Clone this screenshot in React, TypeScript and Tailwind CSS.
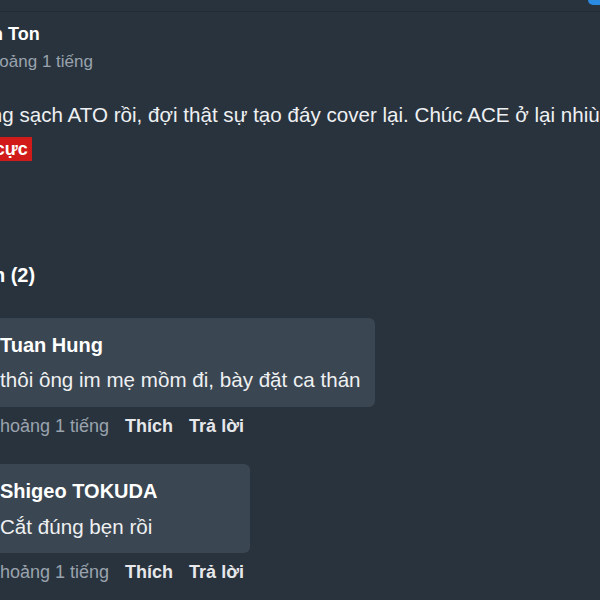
import React from "react";

export default function App() {
  return (
    <div className="relative w-[600px] h-[600px] overflow-hidden bg-[#29333e] font-['Liberation_Sans',Arial,sans-serif]">
      <div className="absolute right-[-12px] top-[-20px] w-[24px] h-[25px] rounded-[5px] bg-[#2b8ae2]" />
      <div className="h-[11px]" />
      <div className="border-t border-[#232b35]">
        <div className="ml-[-63px] flex flex-col items-start pt-[11px]">
          <div className="text-[18px] leading-[22px] font-bold text-white whitespace-nowrap">Nguyen Ton</div>
          <div className="mt-[5px] text-[17px] leading-[24px] text-[#9aa3ad] whitespace-nowrap">Cách khoảng 1 tiếng</div>
          <div className="mt-[27px] text-[20.6px] leading-[28px] text-[#eef0f2] whitespace-nowrap">
            Xả hàng sạch ATO rồi, đợi thật sự tạo đáy cover lại. Chúc ACE ở lại nhiù may mắn
          </div>
          <div className="mt-[8px] ml-[12px] h-[24px] px-[4px] flex items-center bg-[#d11a1a] text-[18px] font-bold text-white whitespace-nowrap">
            Tiêu cực
          </div>
          <div className="mt-[100px] ml-[-23px] text-[20px] leading-[28px] font-bold text-white whitespace-nowrap">
            Bình luận (2)
          </div>
          <div className="ml-[49px] mt-[29px] flex flex-col items-start">
            <div className="rounded-[6px] bg-[#3a4651] px-[14px] pt-[14px] pb-[13px]">
              <div className="text-[20px] leading-[26px] font-bold text-white whitespace-nowrap">Tuan Hung</div>
              <div className="mt-[8px] text-[20.6px] leading-[28px] text-[#eef0f2] whitespace-nowrap">
                thôi ông im mẹ mồm đi, bày đặt ca thán
              </div>
            </div>
            <div className="mt-[7px] pl-[2px] flex gap-4 text-[18px] leading-[24px] whitespace-nowrap">
              <span className="text-[#9aa3ad]">Khoảng 1 tiếng</span>
              <span className="font-bold text-[#e6e8eb]">Thích</span>
              <span className="font-bold text-[#e6e8eb]">Trả lời</span>
            </div>
            <div className="mt-[26px] w-[264px] rounded-[6px] bg-[#3a4651] px-[14px] pt-[14px] pb-[12px]">
              <div className="text-[20px] leading-[26px] font-bold text-white whitespace-nowrap">Shigeo TOKUDA</div>
              <div className="mt-[9px] text-[20.6px] leading-[28px] text-[#eef0f2] whitespace-nowrap">Cắt đúng bẹn rồi</div>
            </div>
            <div className="mt-[7px] pl-[2px] flex gap-4 text-[18px] leading-[24px] whitespace-nowrap">
              <span className="text-[#9aa3ad]">Khoảng 1 tiếng</span>
              <span className="font-bold text-[#e6e8eb]">Thích</span>
              <span className="font-bold text-[#e6e8eb]">Trả lời</span>
            </div>
          </div>
        </div>
      </div>
    </div>
  );
}
